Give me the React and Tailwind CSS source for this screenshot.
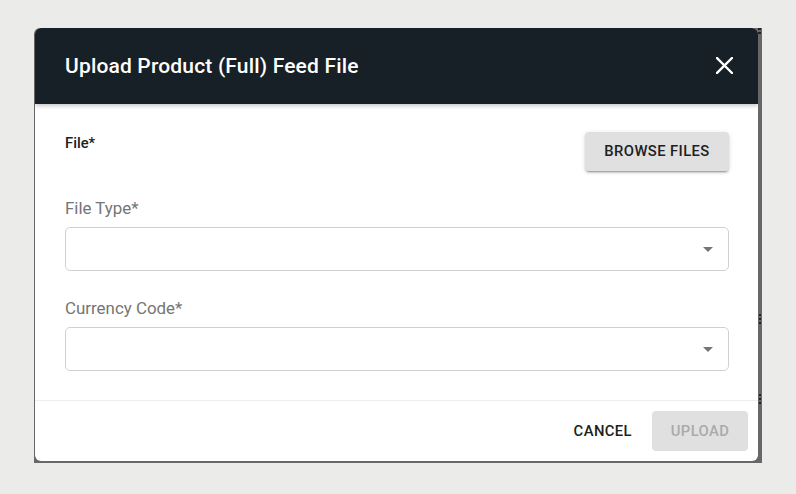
function Marks() {
  return (
    <div className="w-[4px] flex flex-col items-end pr-[1px]">
      <span className="w-[3px] h-[2px] bg-[#222]" />
      <span className="mt-[2px] w-[3px] h-[2px] bg-[#222]" />
      <span className="mt-[280px] w-[2px] h-[2px] bg-[#222]" />
      <span className="mt-[2px] w-[2px] h-[2px] bg-[#222]" />
      <span className="mt-[2px] w-[2px] h-[2px] bg-[#222]" />
      <span className="mt-[70px] w-[2px] h-[2px] bg-[#222]" />
      <span className="mt-[2px] w-[2px] h-[2px] bg-[#222]" />
      <span className="mt-[2px] w-[2px] h-[2px] bg-[#222]" />
    </div>
  );
}

function Arrow() {
  return (
    <svg width="10" height="5" viewBox="0 0 10 5">
      <path d="M0 0 L10 0 L5 5 Z" fill="#757575" />
    </svg>
  );
}

export default function App() {
  return (
    <div
      className="w-[796px] h-[494px] bg-[#ebebea] pt-[28px] pl-[34px]"
      style={{ fontFamily: "Roboto, 'Liberation Sans', sans-serif" }}
    >
      <div className="w-[728px] flex bg-[#676767] pl-px pb-[2px] rounded-tl-[6px]">
        <div className="w-[723px] h-[433px] bg-white rounded-[6px] overflow-hidden flex flex-col">
          <div className="relative z-10 h-[76px] shrink-0 bg-[#172026] pl-[30px] pr-[25px] flex items-center justify-between shadow-[0_2px_4px_rgba(0,0,0,0.22)]">
            <div className="text-white text-[21px] font-medium leading-none tracking-[0.17px]">
              Upload Product (Full) Feed File
            </div>
            <svg width="17" height="17" viewBox="0 0 17 17" className="mt-[-1px]">
              <path d="M1 1 L16 16 M16 1 L1 16" stroke="#ffffff" strokeWidth="2.4" strokeLinecap="square" />
            </svg>
          </div>
          <div className="flex-1 pl-[30px] pr-[29px] pt-[28px] border-b border-[#eeeeee]">
            <div className="flex justify-between items-start">
              <div className="text-[14.8px] leading-[20px] font-medium text-[#212121] pt-px">File*</div>
              <button className="w-[144px] h-[39px] rounded-[4px] bg-[#e0e0e0] text-[#212121] text-[14.8px] font-medium tracking-[0.4px] uppercase shadow-[0_3px_1px_-2px_rgba(0,0,0,0.2),0_2px_2px_0_rgba(0,0,0,0.14),0_1px_5px_0_rgba(0,0,0,0.12)]">
                Browse Files
              </button>
            </div>
            <div className="mt-[25px] text-[16.9px] leading-[24px] text-[#757575]">File Type*</div>
            <div className="mt-[7px] h-[44px] rounded-[5px] border border-[#d0d0d0] flex items-center justify-end pr-[15px]">
              <Arrow />
            </div>
            <div className="mt-[25px] text-[16.9px] leading-[24px] text-[#757575]">Currency Code*</div>
            <div className="mt-[7px] h-[44px] rounded-[5px] border border-[#d0d0d0] flex items-center justify-end pr-[15px]">
              <Arrow />
            </div>
          </div>
          <div className="h-[60px] shrink-0 flex items-center justify-end pr-[10px] gap-[12px]">
            <button className="h-[40px] px-[8px] text-[14.8px] font-medium tracking-[0.4px] text-[#212121] uppercase">
              Cancel
            </button>
            <button className="w-[96px] h-[40px] rounded-[4px] bg-[#e0e0e0] text-[14.8px] font-medium tracking-[0.4px] text-[#aaaaaa] uppercase">
              Upload
            </button>
          </div>
        </div>
        <Marks />
      </div>
    </div>
  );
}
